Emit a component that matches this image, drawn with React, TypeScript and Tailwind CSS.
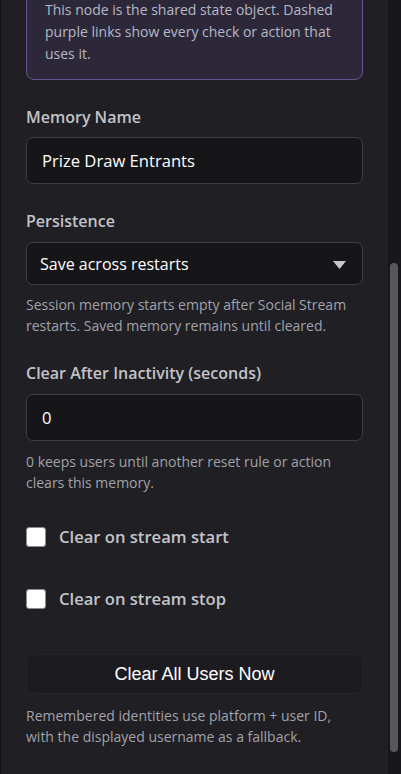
import { useState } from "react";

const font = { fontFamily: '"Open Sans", "Noto Sans", sans-serif' };

function Label({ children }: { children: React.ReactNode }) {
  return (
    <div className="text-[16px] leading-[20px] font-semibold text-[#c3c3c8]">{children}</div>
  );
}

function Help({ children }: { children: React.ReactNode }) {
  return <p className="text-[14px] leading-[21px] text-[#a2a2aa]">{children}</p>;
}

function Check({ label }: { label: string }) {
  const [on, setOn] = useState(false);
  return (
    <label className="flex items-center gap-[13px] cursor-pointer">
      <span
        onClick={() => setOn(!on)}
        className="w-[20px] h-[20px] rounded-[3px] bg-white border border-[#8a8a8f] flex items-center justify-center"
      >
        {on ? <span className="w-[10px] h-[10px] bg-[#7c5cc4]" /> : null}
      </span>
      <span className="text-[16.6px] leading-[22px] font-semibold text-[#c3c3c8]">{label}</span>
    </label>
  );
}

export default function App() {
  const [name, setName] = useState("Prize Draw Entrants");
  const [secs, setSecs] = useState("0");

  return (
    <div className="w-[401px] h-[774px] overflow-hidden flex bg-[#1f1f24]" style={font}>
      <div className="flex-1 border-l border-[#151518] px-[25px]">
        {/* info box, scrolled partly out of view */}
        <div className="mt-[-14px] rounded-[8px] border border-[#6a5391] bg-[#2d2839] px-[18px] pt-[12px] pb-[14px]">
          <p className="text-[14px] leading-[22px] text-[#b5b8c6]">
            This node is the shared state object. Dashed purple links show every check or action that
            uses it.
          </p>
        </div>

        <div className="mt-[27px]">
          <Label>Memory Name</Label>
          <input
            value={name}
            onChange={(e) => setName(e.target.value)}
            className="mt-[10px] w-full h-[47px] rounded-[7px] border border-[#3f3e45] bg-[#161619] px-[15px] text-[16.6px] text-white outline-none"
          />
        </div>

        <div className="mt-[27px]">
          <Label>Persistence</Label>
          <div className="mt-[11px] relative h-[43px] rounded-[7px] border border-[#3f3e45] bg-[#161619] flex items-center px-[13px]">
            <span className="text-[16px] text-white">Save across restarts</span>
            <svg className="absolute right-[16px] top-[18px]" width="13" height="8" viewBox="0 0 13 8">
              <path d="M0 0 L13 0 L6.5 8 Z" fill="#c8c8cc" />
            </svg>
          </div>
          <div className="mt-[9px]">
            <Help>Session memory starts empty after Social Stream restarts. Saved memory remains until cleared.</Help>
          </div>
        </div>

        <div className="mt-[27px]">
          <Label>Clear After Inactivity (seconds)</Label>
          <input
            value={secs}
            onChange={(e) => setSecs(e.target.value)}
            className="mt-[11px] w-full h-[47px] rounded-[7px] border border-[#3f3e45] bg-[#161619] px-[15px] text-[16.6px] text-white outline-none"
          />
          <div className="mt-[10px]">
            <Help>0 keeps users until another reset rule or action clears this memory.</Help>
          </div>
        </div>

        <div className="mt-[33px] flex flex-col gap-[40px]">
          <Check label="Clear on stream start" />
          <Check label="Clear on stream stop" />
        </div>

        <button
          className="mt-[44px] w-full h-[40px] rounded-[7px] border border-[#242329] bg-[#1c1b20] text-[18px] text-white"
          style={{ fontFamily: '"Liberation Sans", Arial, sans-serif' }}
        >
          Clear All Users Now
        </button>
        <div className="mt-[11px] max-w-[320px]">
          <Help>Remembered identities use platform + user ID, with the displayed username as a fallback.</Help>
        </div>
      </div>

      {/* scrollbar */}
      <div className="w-[13px] bg-[#18181b] pt-[263px] pl-[2px]">
        <div className="w-[8px] h-[489px] rounded-[4px] bg-[#58575d]" />
      </div>
    </div>
  );
}
